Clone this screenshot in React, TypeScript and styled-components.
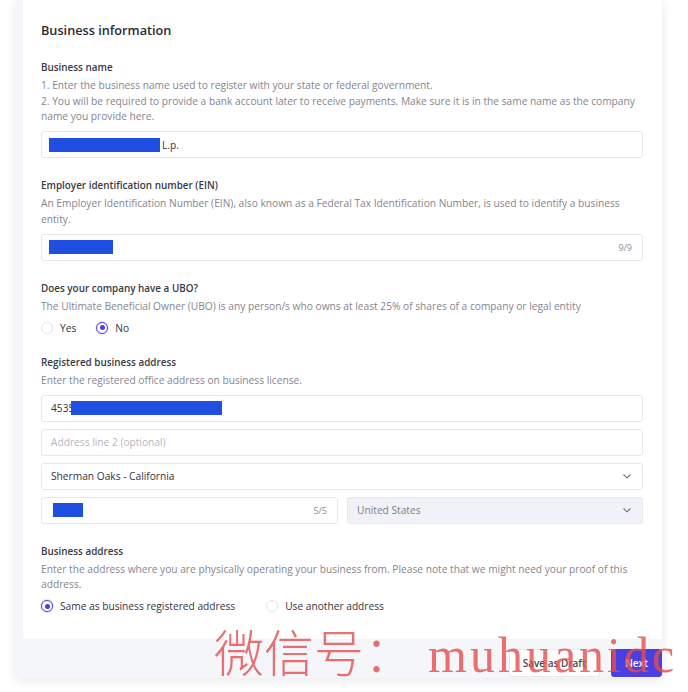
import styled, { createGlobalStyle } from "styled-components";

const GlobalStyle = createGlobalStyle`
  html, body {
    margin: 0;
    padding: 0;
    background: #ffffff;
  }
  body {
    font-family: "Open Sans", Lato, sans-serif;
    color: #2d2d36;
  }
  * {
    box-sizing: border-box;
  }
`;

const Page = styled.div`
  position: relative;
  width: 688px;
  height: 692px;
  padding-left: 16px;
  overflow: hidden;
`;

const Card = styled.div`
  width: 646px;
  background: #f5f6f9;
  box-shadow: 0 2px 10px rgba(30, 30, 60, 0.1);
`;

const Panel = styled.div`
  margin-left: 7px;
  background: #ffffff;
  padding: 22px 19px 26px 18px;
`;

const Title = styled.h2`
  margin: 0;
  font-size: 12.7px;
  line-height: 16px;
  font-weight: 600;
  color: #2b2b33;
`;

const Section = styled.section<{ $first?: boolean }>`
  margin-top: ${({ $first }) => ($first ? "22px" : "20px")};
`;

const Label = styled.div`
  font-size: 9.9px;
  line-height: 14px;
  font-weight: 600;
  color: #393944;
`;

const Hint = styled.p`
  margin: 4px 0 0;
  font-size: 10.2px;
  line-height: 15.5px;
  color: #85858f;
`;

const Fields = styled.div`
  display: flex;
  flex-direction: column;
  gap: 7px;
  margin-top: 6.5px;
`;

const Row = styled.div`
  display: grid;
  grid-template-columns: 297px 1fr;
  gap: 9px;
`;

const Box = styled.div<{ $muted?: boolean }>`
  display: flex;
  align-items: center;
  height: 27px;
  padding: 0 10px 0 9px;
  border: 1px solid #e7e7ed;
  border-radius: 3px;
  background: ${({ $muted }) => ($muted ? "#f1f2f7" : "#ffffff")};
  font-size: 10.2px;
  color: ${({ $muted }) => ($muted ? "#7d7d88" : "#34343d")};
`;

const Value = styled.span`
  flex: 1;
  display: flex;
  align-items: center;
`;

const Placeholder = styled.span`
  flex: 1;
  color: #b6b6be;
`;

const Redact = styled.span<{ $w: number; $ml?: number }>`
  display: inline-block;
  width: ${({ $w }) => $w}px;
  height: 14px;
  margin-left: ${({ $ml }) => $ml ?? 0}px;
  margin-right: 2px;
  background: #1f4fe0;
`;

const Counter = styled.span`
  font-size: 9px;
  color: #8c8c96;
`;

const Chevron = () => (
  <svg width="10" height="10" viewBox="0 0 10 10">
    <polyline points="1.5,3.5 5,6.8 8.5,3.5" fill="none" stroke="#6d6d78" strokeWidth="1.1" />
  </svg>
);

const Radios = styled.div<{ $gap: number }>`
  display: flex;
  align-items: center;
  gap: ${({ $gap }) => $gap}px;
  margin-top: 6.5px;
  height: 14px;
`;

const RadioItem = styled.label`
  display: flex;
  align-items: center;
  gap: 7px;
  font-size: 10.2px;
  color: #34343d;
`;

const Dot = styled.span<{ $on?: boolean }>`
  position: relative;
  width: 12px;
  height: 12px;
  border-radius: 50%;
  border: 1px solid ${({ $on }) => ($on ? "#4b3fdc" : "#e4e4ea")};
  background: #fff;
  box-shadow: ${({ $on }) => ($on ? "0 0 0 1px rgba(75,63,220,0.15)" : "none")};

  &::after {
    content: "";
    display: ${({ $on }) => ($on ? "block" : "none")};
    position: absolute;
    left: 2.5px;
    top: 2.5px;
    width: 5px;
    height: 5px;
    border-radius: 50%;
    background: #4b3fdc;
  }
`;

const Footer = styled.div`
  display: flex;
  justify-content: flex-end;
  gap: 11px;
  padding: 10px 0 1px;
`;

const Button = styled.button<{ $primary?: boolean }>`
  height: 28px;
  padding: 0 13px;
  border-radius: 3px;
  border: 1px solid ${({ $primary }) => ($primary ? "#4a3fe0" : "#e7e7ed")};
  background: ${({ $primary }) => ($primary ? "#4a3fe0" : "#ffffff")};
  color: ${({ $primary }) => ($primary ? "#ffffff" : "#45454f")};
  font-family: "Open Sans", sans-serif;
  font-size: 10px;
  font-weight: 600;
`;

const Watermark = styled.div`
  position: absolute;
  left: 214px;
  top: 625px;
  font-family: "Liberation Serif", "Noto Sans CJK SC", serif;
  font-size: 50px;
  line-height: 60px;
  font-weight: 300;
  color: rgba(228, 78, 78, 0.8);
  white-space: nowrap;
  pointer-events: none;
`;

const Latin = styled.span`
  letter-spacing: 3px;
  margin-left: 14px;
`;

export default function App() {
  return (
    <Page>
      <GlobalStyle />
      <Card>
        <Panel>
          <Title>Business information</Title>

          <Section $first>
            <Label>Business name</Label>
            <Hint>
              1. Enter the business name used to register with your state or federal government.
              <br />
              2. You will be required to provide a bank account later to receive payments. Make sure it is in the same name as the company name you provide here.
            </Hint>
            <Fields>
              <Box>
                <Value>
                  <Redact $w={111} $ml={-2} />
                  L.p.
                </Value>
              </Box>
            </Fields>
          </Section>

          <Section>
            <Label>Employer identification number (EIN)</Label>
            <Hint>
              An Employer Identification Number (EIN), also known as a Federal Tax Identification Number, is used to identify a business entity.
            </Hint>
            <Fields>
              <Box>
                <Value>
                  <Redact $w={64} $ml={-2} />
                </Value>
                <Counter>9/9</Counter>
              </Box>
            </Fields>
          </Section>

          <Section>
            <Label>Does your company have a UBO?</Label>
            <Hint>
              The Ultimate Beneficial Owner (UBO) is any person/s who owns at least 25% of shares of a company or legal entity
            </Hint>
            <Radios $gap={20}>
              <RadioItem>
                <Dot />
                Yes
              </RadioItem>
              <RadioItem>
                <Dot $on />
                No
              </RadioItem>
            </Radios>
          </Section>

          <Section>
            <Label>Registered business address</Label>
            <Hint>Enter the registered office address on business license.</Hint>
            <Fields>
              <Box>
                <Value>
                  4535
                  <Redact $w={151} $ml={-3} />
                </Value>
              </Box>
              <Box>
                <Placeholder>Address line 2 (optional)</Placeholder>
              </Box>
              <Box>
                <Value>Sherman Oaks - California</Value>
                <Chevron />
              </Box>
              <Row>
                <Box>
                  <Value>
                    <Redact $w={30} $ml={2} />
                  </Value>
                  <Counter>5/5</Counter>
                </Box>
                <Box $muted>
                  <Value>United States</Value>
                  <Chevron />
                </Box>
              </Row>
            </Fields>
          </Section>

          <Section>
            <Label>Business address</Label>
            <Hint>
              Enter the address where you are physically operating your business from. Please note that we might need your proof of this address.
            </Hint>
            <Radios $gap={31}>
              <RadioItem>
                <Dot $on />
                Same as business registered address
              </RadioItem>
              <RadioItem>
                <Dot />
                Use another address
              </RadioItem>
            </Radios>
          </Section>
        </Panel>
        <Footer>
          <Button>Save as Draft</Button>
          <Button $primary>Next</Button>
        </Footer>
      </Card>
      <Watermark>
        微信号：<Latin>muhuanidc</Latin>
      </Watermark>
    </Page>
  );
}
